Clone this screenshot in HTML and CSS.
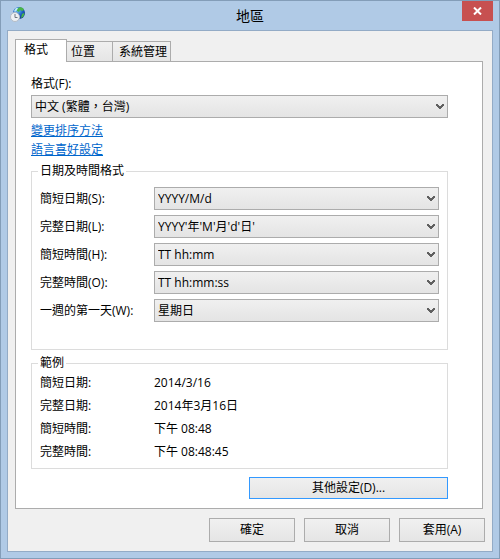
FILE: index.html
```html
<!DOCTYPE html>
<html lang="zh-Hant">
<head>
  <meta charset="UTF-8">
  <title>地區</title>
  <link rel="stylesheet" href="styles.css">
</head>
<body>
  <div class="window">
    <!-- Title bar -->
    <header class="titlebar">
      <svg class="app-icon" viewBox="0 0 16 18" aria-hidden="true">
        <defs>
          <radialGradient id="globe" cx="0.4" cy="0.3" r="0.8">
            <stop offset="0" stop-color="#6fc4f4"/>
            <stop offset="0.5" stop-color="#1f62c4"/>
            <stop offset="1" stop-color="#0b2c78"/>
          </radialGradient>
        </defs>
        <circle cx="9" cy="8" r="6" fill="url(#globe)"/>
        <path d="M7 4 10 2 13 3 14 5 12 6 10 5 9 7 7 6zM12 9 14 8 14.500 9 13 12 11 13z" fill="#48b548"/>
        <path d="M4 6 6 3 8 3 7 5 5 7z" fill="#bfeaf5"/>
        <circle cx="5" cy="12" r="4.500" fill="#eef1f4" stroke="#b4bcc6"/>
        <path d="M5 9v3.500h2.500" fill="none" stroke="#6c7682"/>
      </svg>
      <h1 class="title">地區</h1>
      <button class="close" type="button" aria-label="關閉">
        <svg width="9" height="8" viewBox="0 0 9 8" aria-hidden="true">
          <path d="M1 .5 8 7.500M8 .5 1 7.500" stroke="#fff" stroke-width="2"/>
        </svg>
      </button>
    </header>

    <main class="client">
      <div class="tabs" role="tablist">
        <button class="tab active" type="button" role="tab" aria-selected="true">格式</button>
        <button class="tab" type="button" role="tab" aria-selected="false">位置</button>
        <button class="tab" type="button" role="tab" aria-selected="false">系統管理</button>
      </div>

      <section class="panel" role="tabpanel">
        <label class="format-label" for="format">格式(F):</label>
        <div class="dropdown">
          <select id="format"><option>中文 (繁體，台灣)</option></select>
          <svg class="arrow" viewBox="0 0 8 6" aria-hidden="true"><path d="M0 0h2v1h1v1h2V1h1V0h2v2H7v1H6v1H5v1H3V4H2V3H1V2H0z"/></svg>
        </div>
        <div class="links">
          <a href="#">變更排序方法</a>
          <a href="#">語言喜好設定</a>
        </div>

        <!-- Date and time formats -->
        <fieldset class="group formats">
          <legend>日期及時間格式</legend>
          <div class="format-grid">
            <label for="shortDate">簡短日期(S):</label>
            <div class="dropdown">
              <select id="shortDate"><option>YYYY/M/d</option></select>
              <svg class="arrow" viewBox="0 0 8 6" aria-hidden="true"><path d="M0 0h2v1h1v1h2V1h1V0h2v2H7v1H6v1H5v1H3V4H2V3H1V2H0z"/></svg>
            </div>
            <label for="longDate">完整日期(L):</label>
            <div class="dropdown">
              <select id="longDate"><option>YYYY'年'M'月'd'日'</option></select>
              <svg class="arrow" viewBox="0 0 8 6" aria-hidden="true"><path d="M0 0h2v1h1v1h2V1h1V0h2v2H7v1H6v1H5v1H3V4H2V3H1V2H0z"/></svg>
            </div>
            <label for="shortTime">簡短時間(H):</label>
            <div class="dropdown">
              <select id="shortTime"><option>TT hh:mm</option></select>
              <svg class="arrow" viewBox="0 0 8 6" aria-hidden="true"><path d="M0 0h2v1h1v1h2V1h1V0h2v2H7v1H6v1H5v1H3V4H2V3H1V2H0z"/></svg>
            </div>
            <label for="longTime">完整時間(O):</label>
            <div class="dropdown">
              <select id="longTime"><option>TT hh:mm:ss</option></select>
              <svg class="arrow" viewBox="0 0 8 6" aria-hidden="true"><path d="M0 0h2v1h1v1h2V1h1V0h2v2H7v1H6v1H5v1H3V4H2V3H1V2H0z"/></svg>
            </div>
            <label for="firstDay">一週的第一天(W):</label>
            <div class="dropdown">
              <select id="firstDay"><option>星期日</option></select>
              <svg class="arrow" viewBox="0 0 8 6" aria-hidden="true"><path d="M0 0h2v1h1v1h2V1h1V0h2v2H7v1H6v1H5v1H3V4H2V3H1V2H0z"/></svg>
            </div>
          </div>
        </fieldset>

        <!-- Examples -->
        <fieldset class="group examples">
          <legend>範例</legend>
          <dl class="example-grid">
            <dt>簡短日期:</dt>
            <dd>2014/3/16</dd>
            <dt>完整日期:</dt>
            <dd>2014年3月16日</dd>
            <dt>簡短時間:</dt>
            <dd>下午 08:48</dd>
            <dt>完整時間:</dt>
            <dd>下午 08:48:45</dd>
          </dl>
        </fieldset>

        <button class="btn more" type="button">其他設定(D)...</button>
      </section>

      <footer class="actions">
        <button class="btn" type="button">確定</button>
        <button class="btn" type="button">取消</button>
        <button class="btn" type="button">套用(A)</button>
      </footer>
    </main>
  </div>
</body>
</html>
```

FILE: styles.css
```css
* {
  box-sizing: border-box;
}
body {
  margin: 0;
  background: #b0cae6;
}
body, button, select {
  font-family: "Open Sans", "Noto Sans CJK TC", sans-serif;
  font-size: 12px;
  line-height: 18px;
  color: #000;
}
.window {
  display: flex;
  flex-direction: column;
  min-height: 100vh;
  padding: 0 6px 6px;
  border: 1px solid #839db8;
  background: #b0cae6;
}

/* Title bar */
.titlebar {
  display: grid;
  grid-template-columns: 31px 1fr 31px;
  height: 29px;
}
.app-icon {
  width: 16px;
  height: 18px;
  margin: 4px 0 0 3px;
}
.title {
  margin: 0;
  font-size: 14px;
  font-weight: normal;
  line-height: 29px;
  text-align: center;
}
.close {
  display: flex;
  align-items: center;
  justify-content: center;
  height: 20px;
  padding: 0;
  border: 0;
  background: #c75050;
}

.client {
  flex: 1;
  padding: 8px 7px 9px;
  border: 1px solid #93abc6;
  background: #f0f0f0;
}

/* Tabs */
.tabs {
  display: flex;
  align-items: flex-end;
}
.tab {
  height: 20px;
  padding: 0 17px 0 4px;
  border: 1px solid #acacac;
  border-width: 1px 1px 0 0;
  background: linear-gradient(#f0f0f0, #e5e5e5);
}
.tab:last-child {
  padding: 0 3px 0 6px;
}
.tab.active {
  position: relative;
  height: 23px;
  margin-bottom: -1px;
  padding: 0 18px 2px 8px;
  border-left-width: 1px;
  background: #fff;
}
.panel {
  display: flex;
  flex-direction: column;
  margin-right: 2px;
  padding: 13px 34px 9px 15px;
  border: 1px solid #acacac;
  background: #fff;
}
.format-label {
  margin-bottom: 2px;
}

/* Drop-downs */
.dropdown {
  position: relative;
}
select {
  display: block;
  width: 100%;
  height: 23px;
  padding: 0 20px 0 3px;
  border: 1px solid #acacac;
  border-radius: 0;
  background: linear-gradient(#f0f0f0, #e4e4e4);
  appearance: none;
}
.arrow {
  position: absolute;
  top: 9px;
  right: 4px;
  width: 8px;
  height: 6px;
  fill: #606060;
  pointer-events: none;
}

.links {
  display: flex;
  flex-direction: column;
  align-items: flex-start;
  gap: 1px;
  margin: 4px 0 3px;
}
.links a {
  color: #0066cc;
}

/* Groups */
.group {
  min-width: 0;
  margin: 0 0 4px;
  border: 1px solid #dcdcdc;
}
.group legend {
  margin-left: -2px;
  padding: 0 2px;
}
.formats {
  padding: 7px 8px 27px;
}
.examples {
  padding: 0 8px 5px;
}
.format-grid, .example-grid {
  display: grid;
  grid-template-columns: 114px 1fr;
  align-items: center;
}
.format-grid {
  row-gap: 5px;
}
.example-grid {
  row-gap: 1px;
  margin: 0;
  line-height: 22px;
}
.example-grid dd {
  margin: 0;
}

/* Buttons */
.btn {
  width: 86px;
  height: 24px;
  padding: 0;
  border: 1px solid #acacac;
  background: linear-gradient(#f0f0f0, #e5e5e5);
}
.btn.more {
  align-self: flex-end;
  width: 199px;
  height: 22px;
  margin-top: 4px;
  border-color: #3399ff;
}
.actions {
  display: flex;
  justify-content: flex-end;
  gap: 9px;
  margin-top: 9px;
}
```
